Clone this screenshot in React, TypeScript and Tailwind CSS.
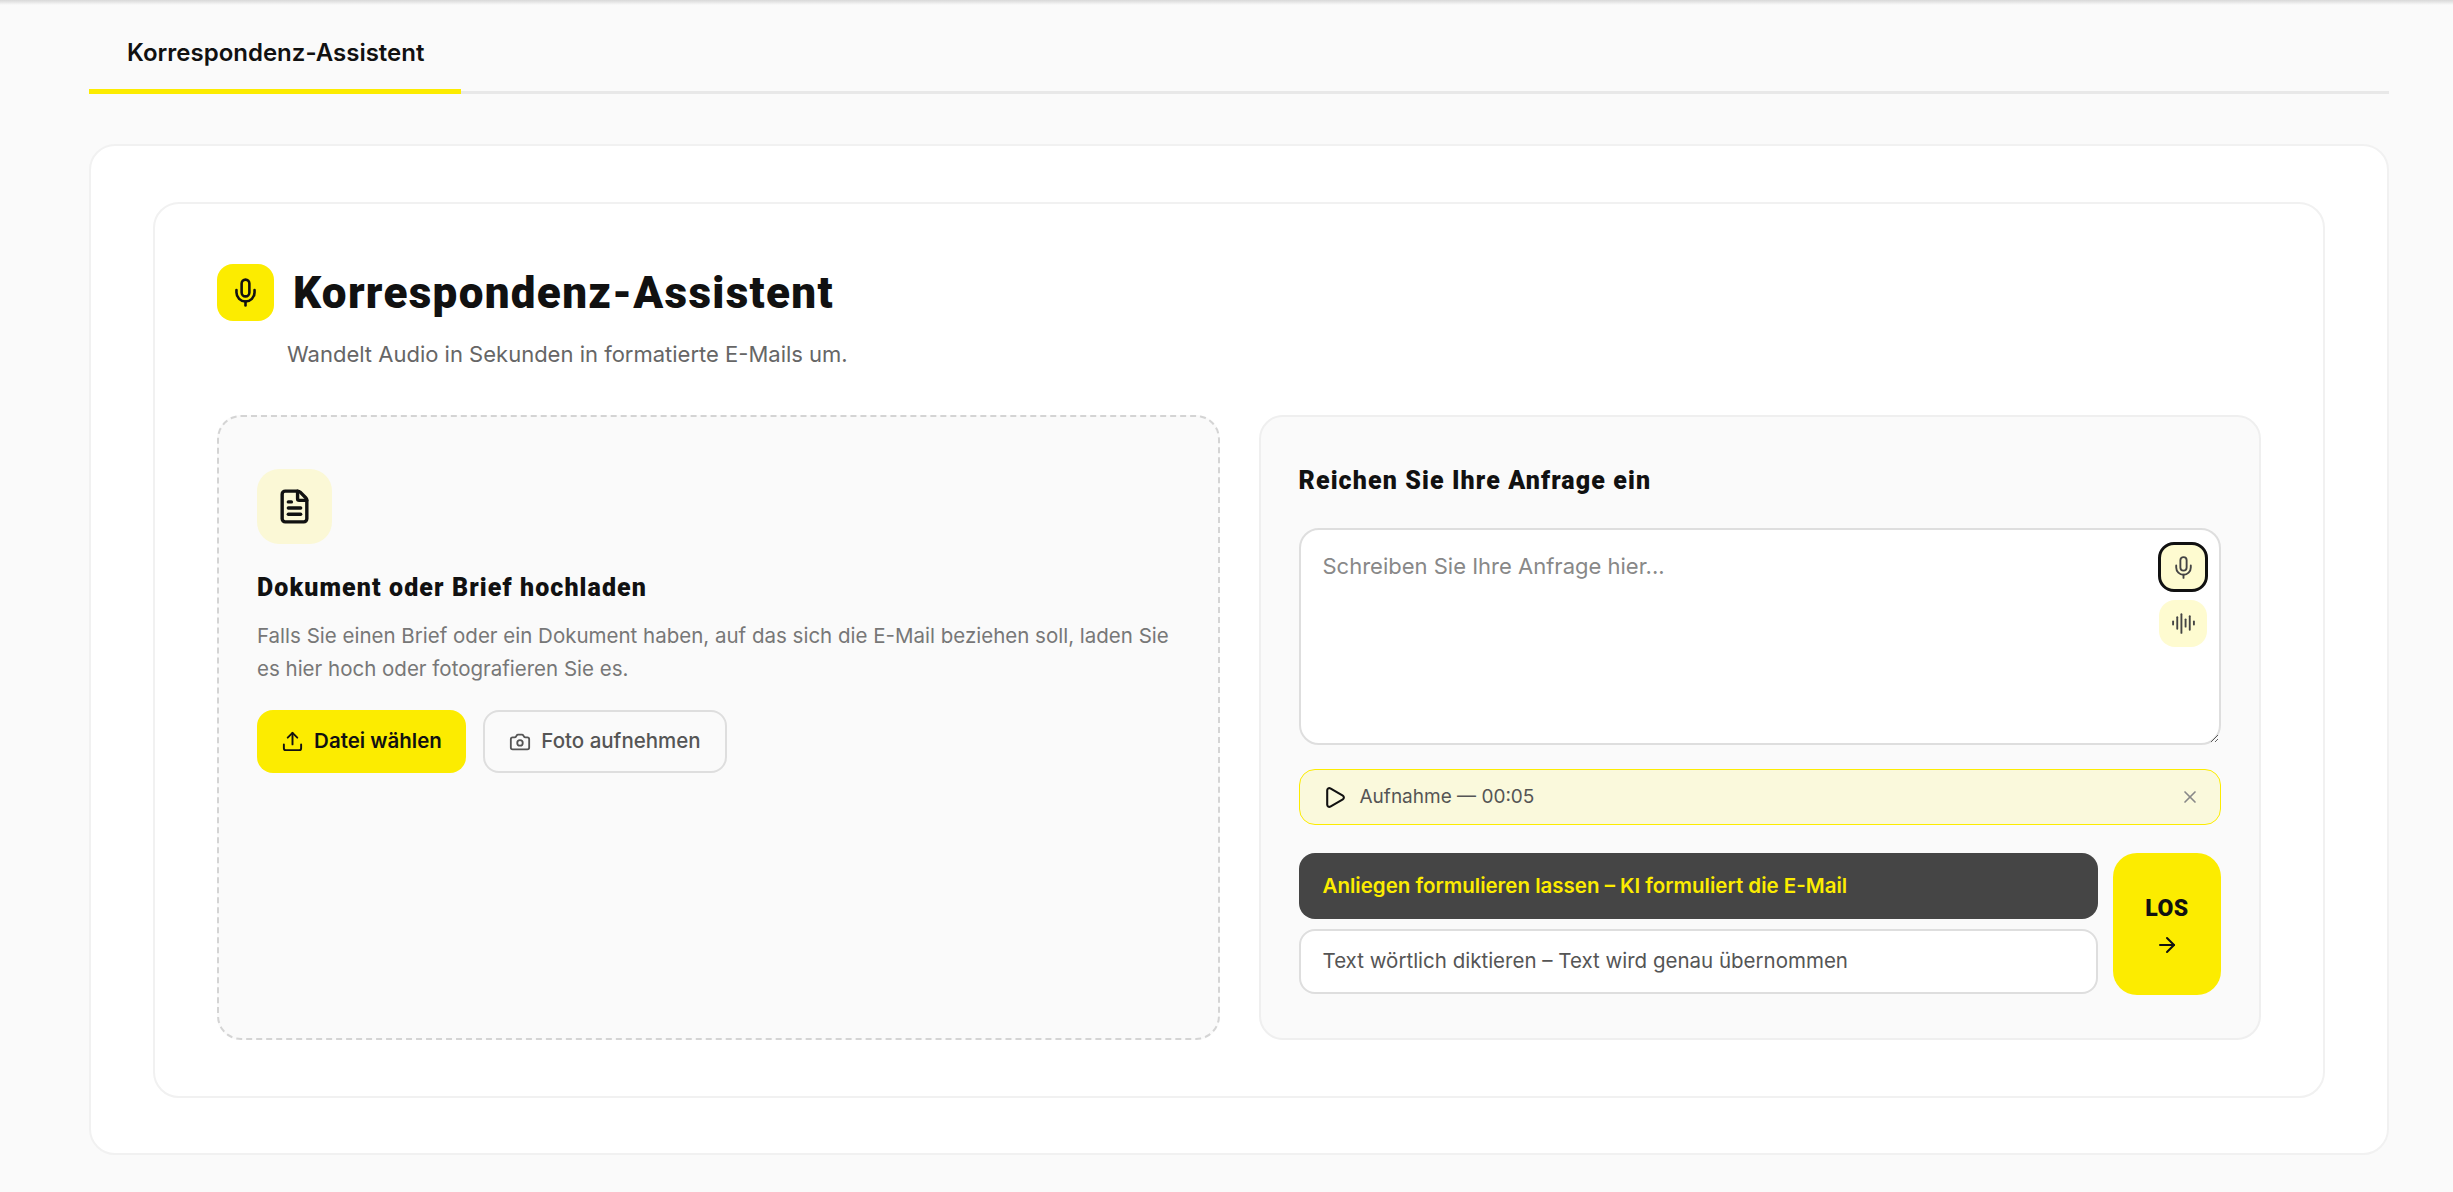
import { ArrowRight, AudioLines, Camera, FileText, Mic, Play, Upload, X } from "lucide-react";

const inter = "font-['Inter',sans-serif]";
const display = "font-['Roboto',sans-serif] font-black";

export default function App() {
  return (
    <div className={`min-h-[1192px] bg-[#fafafa] pr-[64px] pl-[89px] ${inter}`}>
      <div className="absolute top-0 left-0 h-[5px] w-full bg-gradient-to-b from-[#d8d8d8] to-[#fafafa]" />

      {/* Tabs */}
      <div className="flex h-[94px] border-b-[3px] border-[#e8e8e8]">
        <div className="-mb-[3px] flex w-[372px] items-center rounded-t-[3px] border-b-[5px] border-[#fcec00] pt-[17px] pl-[38px] text-[24px] leading-none font-semibold text-[#111]">
          Korrespondenz-Assistent
        </div>
      </div>

      {/* Outer card */}
      <div className="mt-[50px] h-[1011px] rounded-[26px] border-2 border-[#f1f1f1] bg-white px-[62px] pt-[56px]">
        <div className="h-[896px] rounded-[26px] border-2 border-[#f1f1f1] bg-white px-[62px] pt-[60px]">
          <div className="flex items-center gap-[19px]">
            <div className="flex h-[57px] w-[57px] items-center justify-center rounded-[16px] bg-[#fcec00]">
              <Mic size={31} className="text-[#111]" />
            </div>
            <h1 className={`text-[44px] leading-none tracking-[1.3px] text-[#111] ${display}`}>
              Korrespondenz-Assistent
            </h1>
          </div>
          <p className="mt-[19px] ml-[70px] text-[22px] leading-[28px] text-[#666]">
            Wandelt Audio in Sekunden in formatierte E-Mails um.
          </p>

          <div className="mt-[47px] grid h-[625px] grid-cols-2 gap-[39px]">
            {/* Upload */}
            <div className="rounded-[24px] border-2 border-dashed border-[#d4d4d4] bg-[#fafafa] pt-[52px] pl-[38px]">
              <div className="flex h-[75px] w-[75px] items-center justify-center rounded-[22px] bg-[#fbf8d6]">
                <FileText size={37} strokeWidth={2.2} className="text-[#111]" />
              </div>
              <h2 className={`mt-[29px] text-[25px] leading-[30px] tracking-[1.1px] text-[#111] ${display}`}>
                Dokument oder Brief hochladen
              </h2>
              <p className="mt-[17px] w-[930px] text-[20.5px] leading-[32.5px] text-[#777]">
                Falls Sie einen Brief oder ein Dokument haben, auf das sich die E-Mail beziehen soll, laden Sie es hier hoch oder fotografieren Sie es.
              </p>
              <div className="mt-[25px] flex gap-[17px]">
                <button className="flex h-[63px] w-[209px] items-center justify-center gap-[10px] rounded-[16px] bg-[#fcec00] text-[20.5px] font-semibold text-[#111]">
                  <Upload size={23} />
                  Datei wählen
                </button>
                <button className="flex h-[63px] w-[244px] items-center justify-center gap-[10px] rounded-[16px] border-2 border-[#dedede] text-[20.5px] font-medium text-[#555]">
                  <Camera size={22} />
                  Foto aufnehmen
                </button>
              </div>
            </div>

            {/* Request */}
            <div className="rounded-[24px] border-2 border-[#efefef] bg-[#fafafa] px-[38px] pt-[49px]">
              <h2 className={`text-[25px] leading-[30px] tracking-[1.1px] text-[#111] ${display}`}>
                Reichen Sie Ihre Anfrage ein
              </h2>
              <div className="relative mt-[32px] h-[217px]">
                <textarea
                  placeholder="Schreiben Sie Ihre Anfrage hier..."
                  className="block h-full w-full rounded-[20px] border-2 border-[#dedede] bg-white px-[22px] py-[20px] text-[22px] leading-[32px] outline-none placeholder:text-[#888]"
                />
                <div className="absolute top-[14px] right-[13px] flex flex-col items-center gap-[8px]">
                  <button className="flex h-[50px] w-[50px] items-center justify-center rounded-[16px] border-[3px] border-[#111] bg-[#fefbd0] text-[#444]">
                    <Mic size={25} strokeWidth={1.8} />
                  </button>
                  <button className="flex h-[47px] w-[48px] items-center justify-center rounded-[16px] bg-[#fefbd0] text-[#444]">
                    <AudioLines size={25} strokeWidth={1.8} />
                  </button>
                </div>
              </div>

              <div className="mt-[24px] flex h-[56px] items-center rounded-[16px] border-[1.5px] border-[#fcec00] bg-[#faf9dc] pr-[20px] pl-[22px]">
                <Play size={25} strokeWidth={2} className="text-[#111]" />
                <span className="ml-[13px] text-[19px] text-[#555]">Aufnahme — 00:05</span>
                <X size={20} className="ml-auto text-[#888]" />
              </div>

              <div className="mt-[28px] flex gap-[15px]">
                <div className="flex flex-1 flex-col gap-[10px]">
                  <button className="h-[66px] rounded-[16px] bg-[#454545] pl-[24px] text-left text-[20.5px] font-semibold text-[#fcec00]">
                    Anliegen formulieren lassen – KI formuliert die E-Mail
                  </button>
                  <button className="h-[65px] rounded-[16px] border-2 border-[#dedede] bg-white pl-[22px] text-left text-[20.5px] text-[#555]">
                    Text wörtlich diktieren – Text wird genau übernommen
                  </button>
                </div>
                <button className="flex h-[142px] w-[108px] flex-col items-center justify-center gap-[9px] rounded-[24px] bg-[#fcec00] pt-[3px] text-[#111]">
                  <span className={`text-[23px] leading-[30px] tracking-[0.5px] ${display}`}>LOS</span>
                  <ArrowRight size={24} />
                </button>
              </div>
            </div>
          </div>
        </div>
      </div>
    </div>
  );
}
